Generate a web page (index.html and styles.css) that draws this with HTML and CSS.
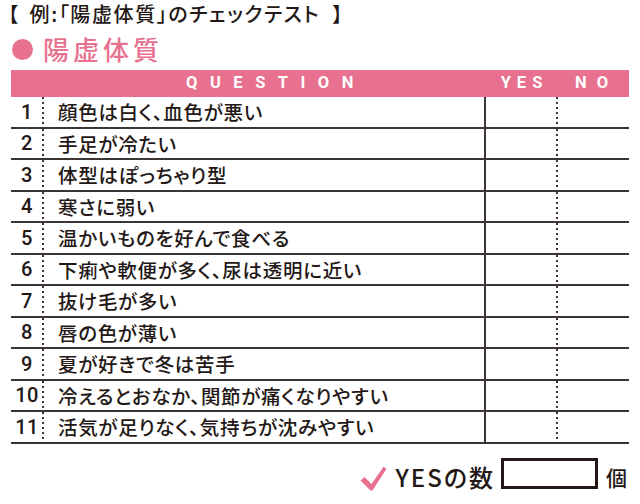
FILE: index.html
```html
<!DOCTYPE html>
<html lang="ja">
<head>
<meta charset="utf-8">
<link rel="stylesheet" href="styles.css">
</head>
<body>
<div class="sheet">
  <h1 class="title"><span class="br-l">【</span>例:「陽虚体質」のチェックテスト<span class="br-r">】</span></h1>
  <h2 class="heading"><span class="dot"></span><span class="heading-text">陽虚体質</span></h2>
  <div class="table">
    <div class="head">
      <span class="h-q">QUESTION</span>
      <span class="h-yes">YES</span>
      <span class="h-no">NO</span>
    </div>
    <div class="row"><span class="num">1</span><span class="q">顔色は白く、血色が悪い</span><span class="yes"></span><span class="no"></span></div>
    <div class="row"><span class="num">2</span><span class="q">手足が冷たい</span><span class="yes"></span><span class="no"></span></div>
    <div class="row"><span class="num">3</span><span class="q">体型はぽっちゃり型</span><span class="yes"></span><span class="no"></span></div>
    <div class="row"><span class="num">4</span><span class="q">寒さに弱い</span><span class="yes"></span><span class="no"></span></div>
    <div class="row"><span class="num">5</span><span class="q">温かいものを好んで食べる</span><span class="yes"></span><span class="no"></span></div>
    <div class="row"><span class="num">6</span><span class="q">下痢や軟便が多く、尿は透明に近い</span><span class="yes"></span><span class="no"></span></div>
    <div class="row"><span class="num">7</span><span class="q">抜け毛が多い</span><span class="yes"></span><span class="no"></span></div>
    <div class="row"><span class="num">8</span><span class="q">唇の色が薄い</span><span class="yes"></span><span class="no"></span></div>
    <div class="row"><span class="num">9</span><span class="q">夏が好きで冬は苦手</span><span class="yes"></span><span class="no"></span></div>
    <div class="row"><span class="num">10</span><span class="q">冷えるとおなか、関節が痛くなりやすい</span><span class="yes"></span><span class="no"></span></div>
    <div class="row"><span class="num">11</span><span class="q">活気が足りなく、気持ちが沈みやすい</span><span class="yes"></span><span class="no"></span></div>
  </div>
  <div class="footer">
    <svg class="check" width="27" height="25" viewBox="0 0 27 25" aria-hidden="true">
      <path d="M0.5 14.5 L4.5 11 L11.5 18 L23.5 0.8 L26.5 2.8 L12.5 24.5 L10.5 24.5 Z" fill="#e8718f"/>
    </svg>
    <span class="count-label">YESの数</span>
    <span class="count-box"></span>
    <span class="unit">個</span>
  </div>
</div>
</body>
</html>
```

FILE: styles.css
```css
html, body {
  margin: 0;
  padding: 0;
  background: #ffffff;
}

body {
  font-family: "Noto Sans CJK JP", "Noto Sans", sans-serif;
  color: #231815;
}

.sheet {
  width: 618px;
  padding: 0 11px;
}

.title {
  margin: 0 0 0 -3px;
  height: 27px;
  display: flex;
  align-items: center;
  font-size: 20px;
  font-weight: 500;
  line-height: 1;
  font-feature-settings: "palt";
  letter-spacing: 1.6px;
}

.br-l {
  margin-right: 10px;
}

.br-r {
  margin-left: 12px;
}

.heading {
  margin: 0;
  height: 43px;
  display: flex;
  align-items: center;
  color: #e8718f;
  font-size: 26px;
  font-weight: 500;
  line-height: 1;
}

.dot {
  width: 21px;
  height: 21px;
  border-radius: 50%;
  background: #e8718f;
  margin: 2px 10px 0 1px;
}

.heading-text {
  letter-spacing: 4px;
}

.head,
.row {
  display: grid;
  grid-template-columns: 33px 440px 72px 73px;
}

.head {
  height: 27px;
  background: #e8718f;
  color: #ffffff;
  font-family: Roboto, "Liberation Sans", sans-serif;
  font-weight: 700;
  font-size: 16.5px;
  align-items: center;
  line-height: 1;
}

.h-q {
  grid-column: 2;
  text-align: center;
  letter-spacing: 12.5px;
  padding-left: 24px;
}

.h-yes {
  text-align: center;
  letter-spacing: 6px;
  padding-left: 9px;
}

.h-no {
  text-align: center;
  letter-spacing: 10px;
  padding-left: 8px;
}

.row {
  height: 31.5px;
  box-sizing: border-box;
  border-bottom: 2px solid #3d3533;
  align-items: center;
}

.num {
  align-self: stretch;
  display: flex;
  align-items: center;
  justify-content: center;
  font-family: Roboto, "Liberation Sans", sans-serif;
  font-size: 20px;
  font-weight: 500;
  letter-spacing: 0.5px;
  padding-right: 1px;
  background: linear-gradient(#3d3533 40%, transparent 40%) right top / 2px 5px repeat-y;
  margin-bottom: -2px;
  padding-bottom: 2px;
}

.q {
  padding-left: 14px;
  font-size: 19.5px;
  font-weight: 500;
  line-height: 1;
  white-space: nowrap;
  font-feature-settings: "palt";
  letter-spacing: 0.7px;
}

.yes {
  align-self: stretch;
  border-left: 2px solid #3d3533;
  margin-bottom: -2px;
}

.no {
  align-self: stretch;
  background: linear-gradient(#3d3533 40%, transparent 40%) left top / 2px 5px repeat-y;
  margin-bottom: -2px;
}

.footer {
  display: flex;
  justify-content: flex-end;
  align-items: center;
  margin-top: 12px;
  margin-right: 2px;
}

.check {
  margin-right: 9px;
  margin-top: 10px;
}

.count-label {
  font-size: 24px;
  font-weight: 500;
  line-height: 1;
  margin-top: 8px;
  letter-spacing: 2px;
  font-feature-settings: "palt";
}

.count-box {
  width: 91px;
  height: 25px;
  border: 3px solid #231815;
  margin-left: 6px;
}

.unit {
  font-size: 21px;
  font-weight: 500;
  line-height: 1;
  margin-left: 8px;
  margin-top: 8px;
}
```
